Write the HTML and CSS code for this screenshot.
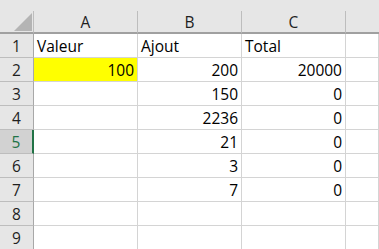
FILE: index.html
```html
<!DOCTYPE html>
<html>
<head>
<meta charset="utf-8">
<link rel="stylesheet" href="styles.css">
</head>
<body>
<div class="sheet">
  <div class="topband"></div>
  <div class="grid">
    <div class="corner"><span class="tri"></span></div>
    <div class="colhead">A</div>
    <div class="colhead">B</div>
    <div class="colhead">C</div>
    <div class="colhead last"></div>

    <div class="rowhead">1</div>
    <div class="cell">Valeur</div>
    <div class="cell">Ajout</div>
    <div class="cell">Total</div>
    <div class="cell"></div>

    <div class="rowhead">2</div>
    <div class="cell num yellow">100</div>
    <div class="cell num">200</div>
    <div class="cell num">20000</div>
    <div class="cell"></div>

    <div class="rowhead">3</div>
    <div class="cell"></div>
    <div class="cell num">150</div>
    <div class="cell num">0</div>
    <div class="cell"></div>

    <div class="rowhead">4</div>
    <div class="cell"></div>
    <div class="cell num">2236</div>
    <div class="cell num">0</div>
    <div class="cell"></div>

    <div class="rowhead selected">5</div>
    <div class="cell"></div>
    <div class="cell num">21</div>
    <div class="cell num">0</div>
    <div class="cell"></div>

    <div class="rowhead">6</div>
    <div class="cell"></div>
    <div class="cell num">3</div>
    <div class="cell num">0</div>
    <div class="cell"></div>

    <div class="rowhead">7</div>
    <div class="cell"></div>
    <div class="cell num">7</div>
    <div class="cell num">0</div>
    <div class="cell"></div>

    <div class="rowhead">8</div>
    <div class="cell"></div>
    <div class="cell"></div>
    <div class="cell"></div>
    <div class="cell"></div>

    <div class="rowhead">9</div>
    <div class="cell"></div>
    <div class="cell"></div>
    <div class="cell"></div>
    <div class="cell"></div>
  </div>
</div>
</body>
</html>
```

FILE: styles.css
```css
* { box-sizing: border-box; }
html, body {
  margin: 0;
  padding: 0;
  width: 379px;
  height: 249px;
  overflow: hidden;
  background: #ffffff;
}
.sheet {
  font-family: "Open Sans", "Liberation Sans", sans-serif;
  font-size: 15.5px;
  color: #000;
}
.topband {
  height: 11px;
  background: #e6e6e6;
}
.grid {
  display: grid;
  grid-template-columns: 34px 104px 104px 104px 1fr;
  grid-template-rows: 23px repeat(9, 24px);
}
.corner {
  background: #e6e6e6;
  border-right: 1px solid #bdbdbd;
  border-bottom: 2px solid #a0a0a0;
  position: relative;
}
.tri {
  position: absolute;
  left: 14px;
  top: 2px;
  width: 0;
  height: 0;
  border-style: solid;
  border-width: 0 0 18px 18px;
  border-color: transparent transparent #b4b4b4 transparent;
}
.colhead {
  background: #e6e6e6;
  border-right: 1px solid #bdbdbd;
  border-bottom: 2px solid #a0a0a0;
  display: flex;
  align-items: flex-end;
  justify-content: center;
  line-height: 20px;
  padding-bottom: 0;
  color: #1f1f1f;
}
.colhead.last { border-right: none; }
.rowhead {
  background: #e6e6e6;
  border-right: 1px solid #a8a8a8;
  border-bottom: 1px solid #bdbdbd;
  display: flex;
  align-items: flex-end;
  justify-content: center;
  line-height: 20px;
  padding-bottom: 1px;
  color: #1f1f1f;
}
.rowhead.selected {
  background: #d2d2d2;
  border-right: 2px solid #217346;
  color: #217346;
}
.cell {
  background: #ffffff;
  border-right: 1px solid #d4d4d4;
  border-bottom: 1px solid #d4d4d4;
  display: flex;
  align-items: flex-end;
  line-height: 20px;
  padding: 0 3px 1px 3px;
  white-space: nowrap;
}
.cell.num { justify-content: flex-end; }
.cell.yellow { background: #ffff00; }
```
